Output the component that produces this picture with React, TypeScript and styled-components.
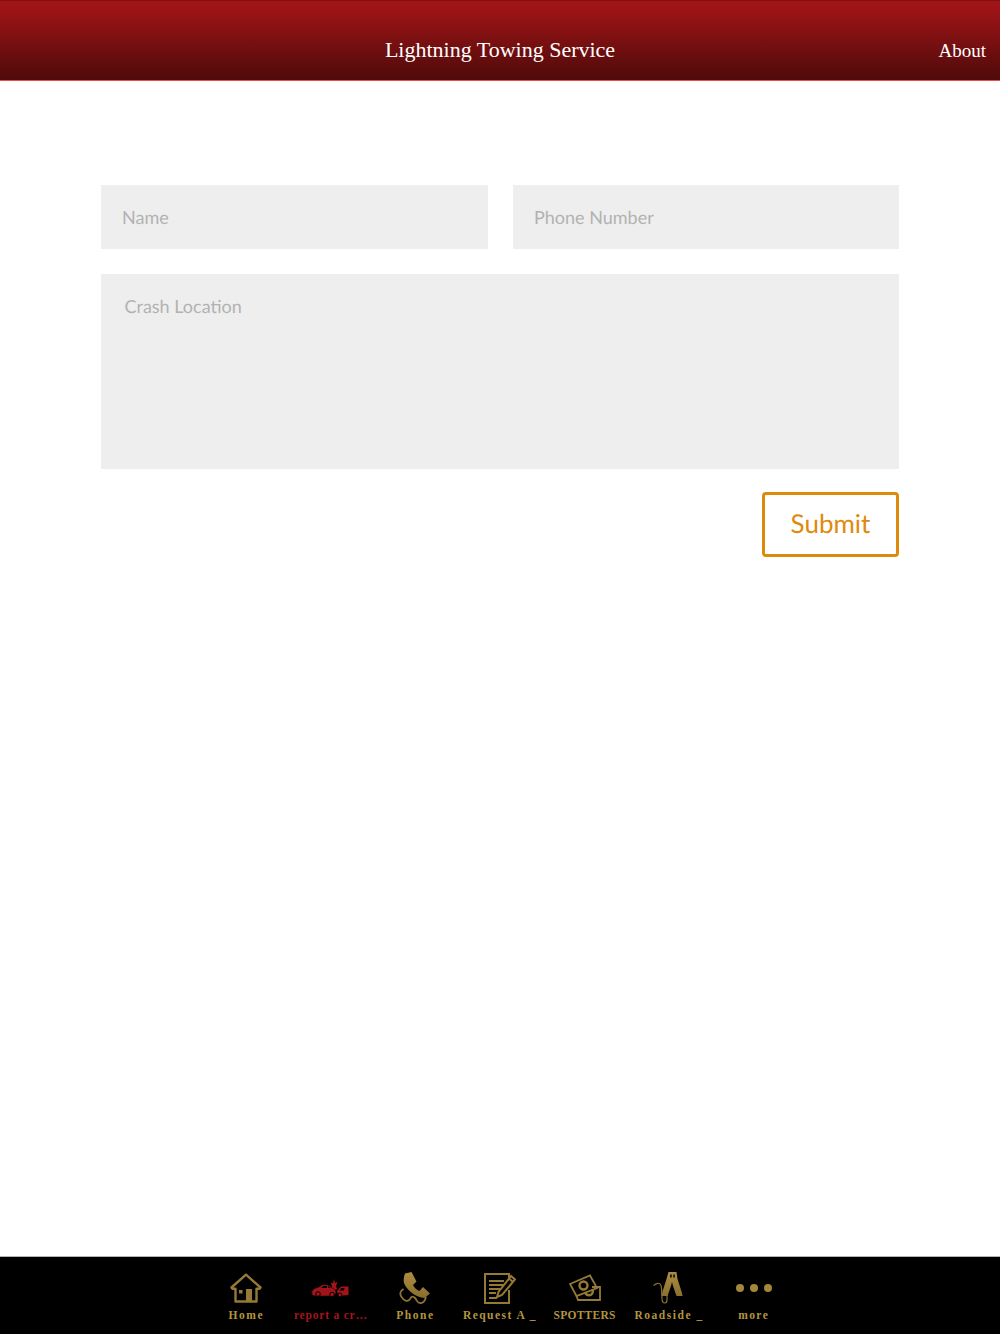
import React from "react";
import styled, { createGlobalStyle } from "styled-components";

const Global = createGlobalStyle`
  html, body { margin: 0; padding: 0; background: #fff; height: 100%; }
  #root { height: 100%; }
  * { box-sizing: border-box; }
`;

const Page = styled.div`
  width: 1000px;
  height: 1334px;
  display: flex;
  flex-direction: column;
  overflow: hidden;
  background: #fff;
`;

const Header = styled.header`
  position: relative;
  flex: none;
  height: 81px;
  display: flex;
  align-items: center;
  justify-content: center;
  padding-top: 18px;
  background: linear-gradient(180deg, #a21416 0%, #9c1416 12%, #4f0a0a 100%);
  border-top: 1px solid #7d1214;
  border-bottom: 1px solid #f04a4c;
  color: #fff;
`;

const Title = styled.h1`
  margin: 0;
  font-family: "Liberation Serif", serif;
  font-size: 22px;
  line-height: 26px;
  font-weight: 400;
`;

const HeaderAction = styled.span`
  position: absolute;
  right: 14px;
  top: 38px;
  font-family: "Liberation Serif", serif;
  font-size: 19px;
  line-height: 24px;
`;

const Main = styled.main`
  flex: 1;
  padding: 104px 101px 0;
`;

const Form = styled.form`
  display: flex;
  flex-direction: column;
  align-items: stretch;
`;

const Row = styled.div`
  display: grid;
  grid-template-columns: 387px 386px;
  column-gap: 25px;
  margin-bottom: 25px;
`;

const Field = styled.input`
  height: 64px;
  width: 100%;
  padding: 0 21px;
  border: 0;
  border-radius: 0;
  outline: 0;
  background: #eee;
  font-family: Lato, sans-serif;
  font-size: 18px;
  text-rendering: geometricPrecision;
  &::placeholder { color: #b2b2b2; opacity: 1; }
`;

const Area = styled.textarea`
  display: block;
  height: 195px;
  width: 100%;
  padding: 20px 23.5px;
  border: 0;
  border-radius: 0;
  outline: 0;
  resize: none;
  background: #eee;
  font-family: Lato, sans-serif;
  font-size: 18px;
  line-height: 24px;
  text-rendering: geometricPrecision;
  &::placeholder { color: #b2b2b2; opacity: 1; }
`;

const Actions = styled.div`
  display: flex;
  justify-content: flex-end;
  margin-top: 23px;
`;

const Submit = styled.button`
  width: 137px;
  height: 65px;
  padding: 0 0 3px;
  background: #fff;
  border: 3px solid #e08a0c;
  border-radius: 4px;
  color: #e08a0c;
  font-family: Lato, sans-serif;
  font-size: 26px;
  font-weight: 400;
  text-rendering: geometricPrecision;
`;

const TabBar = styled.nav`
  flex: none;
  height: 78px;
  background: #000;
  border-top: 1px solid #b5b5b5;
  display: flex;
  justify-content: center;
`;

const Tab = styled.div`
  width: 84.57px;
  display: flex;
  flex-direction: column;
  align-items: center;
`;

const IconSlot = styled.div`
  height: 40px;
  margin-top: 11px;
  width: 44px;
  display: flex;
  align-items: center;
  justify-content: center;
`;

const TabLabel = styled.span<{ $active?: boolean; $spacing: number }>`
  font-family: "Liberation Serif", serif;
  font-size: 11.5px;
  line-height: 14px;
  font-weight: 700;
  letter-spacing: ${(p) => p.$spacing}px;
  white-space: nowrap;
  color: ${(p) => (p.$active ? "#a8141a" : "#b3953f")};
`;

const Defs = styled.svg`
  position: absolute;
  width: 0;
  height: 0;
`;

const Gold = () => (
  <Defs>
    <defs>
      <linearGradient id="gold" gradientUnits="userSpaceOnUse" x1="0" y1="0" x2="0" y2="32">
        <stop offset="0" stopColor="#ad8e40" />
        <stop offset="1" stopColor="#806528" />
      </linearGradient>
    </defs>
  </Defs>
);

const HomeIcon = () => (
  <svg width="32" height="30" viewBox="0 0 32 30" fill="none" stroke="#957a35" strokeWidth="2.400">
    <path d="M1.500 14.500 16 1.700l14.500 12.800-1 1.300H26.500V28.500H5.500V15.800H2.500z" strokeLinejoin="round" />
    <rect x="16" y="16" width="6" height="13" fill="#957a35" stroke="none" />
    <rect x="9" y="17" width="3.500" height="3.500" fill="#957a35" stroke="none" />
  </svg>
);

const CrashIcon = () => (
  <svg width="37" height="18" viewBox="0 0 37 18" fill="#a3141a">
    <path d="M22 0l1 4 2.500-1-1.500 4 1 3-3 2-3-2 1-3-1.500-3.500 2.500 1z" />
    <path d="M0 13c0-2.500 3-4 6-4.500l4-2.500c4-1 8 0 10 3l3.500 2 .5 3-2 3H3l-3-1z" stroke="#000" strokeWidth=".5" />
    <path d="M25 12l4-4.500h7.500V16l-10 1z" />
    <path d="M9 9l2.500-2H15v2zM16 7l3 2h-3zM29.500 9h3l-.5 2.500h-4.500z" fill="#000" />
    <circle cx="6" cy="15" r="2.300" stroke="#000" />
    <circle cx="20" cy="15.500" r="2.300" stroke="#000" />
    <circle cx="28" cy="16" r="2" stroke="#000" />
  </svg>
);

const PhoneIcon = () => (
  <svg width="32" height="32" viewBox="0 0 32 32" fill="none">
    <path d="M6 1.500 12.500 0l5 9.500L14 13c1 2.500 3.500 5 6.500 6l3.500-4 7 6.500-5.500 4.500C17 25.500 7.500 18 5 11c-.7-3-.2-6.500 1-9.500z" fill="url(#gold)" />
    <path d="M4.500 17C1 19 .5 22 2.500 25c2 3 6 6 8.500 2 1.500-3 3-3 5-1s2 5 5 5c3 .5 5-2 6-6" stroke="#8d7231" strokeWidth="1.800" />
  </svg>
);

const FormIcon = () => (
  <svg width="32" height="31" viewBox="0 0 32 31" fill="none" stroke="#957a35" strokeWidth="2">
    <path d="M25 7V1H1v29h24V17" />
    <path d="M5 8h15M5 12h15M5 16h11M5 20h7M5 25h8" />
    <path d="M13 24l1.500-5L27 3l4 3.500L18 22z" fill="#000" />
    <path d="M25 5.500l4 3.500" />
  </svg>
);

const MoneyIcon = () => (
  <svg width="32" height="28" viewBox="0 0 32 28" fill="none" stroke="#957a35" strokeWidth="1.800">
    <path d="M1 10 21 1.500 28 14 7.500 22z" />
    <circle cx="14.500" cy="11.500" r="4" strokeWidth="2.400" />
    <path d="M23 13h8v13H9l-1.500-4" />
    <path d="M16 19c2 3 6 3 7.500 0l.5-3" strokeWidth="2.400" />
  </svg>
);

const CablesIcon = () => (
  <svg width="32" height="32" viewBox="0 0 32 32" fill="none">
    <path d="M15.500 0h8l1 7 4.500 14 .5 3h-6l-3.500-10-1-4-1 4-3.500 10h-6l.5-3 4.500-14z" fill="url(#gold)" />
    <rect x="17.200" y="2.500" width="1.500" height="3" fill="#000" />
    <rect x="20.300" y="2.500" width="1.500" height="3" fill="#000" />
    <path d="M.5 13.500c3-2.500 5.500-3 7-1 1.500 2 1 5 1.500 14 0 3 1.500 4.500 3 4.500s2-1.500 2-3v-5" stroke="#8d7231" strokeWidth="1.200" />
  </svg>
);

const MoreIcon = () => (
  <svg width="36" height="8" viewBox="0 0 36 8" fill="#a3873a">
    <circle cx="4" cy="4" r="4" />
    <circle cx="18" cy="4" r="4" />
    <circle cx="32" cy="4" r="4" />
  </svg>
);

const tabs = [
  { label: "Home", icon: <HomeIcon />, spacing: 1.6 },
  { label: "report a cr…", icon: <CrashIcon />, active: true, spacing: 0.8 },
  { label: "Phone", icon: <PhoneIcon />, spacing: 1.5 },
  { label: "Request A _", icon: <FormIcon />, spacing: 1.45 },
  { label: "SPOTTERS", icon: <MoneyIcon />, spacing: 0.25 },
  { label: "Roadside _", icon: <CablesIcon />, spacing: 1.55 },
  { label: "more", icon: <MoreIcon />, spacing: 1.4 },
];

export default function App() {
  return (
    <Page>
      <Global />
      <Gold />
      <Header>
        <Title>Lightning Towing Service</Title>
        <HeaderAction>About</HeaderAction>
      </Header>
      <Main>
        <Form onSubmit={(e) => e.preventDefault()}>
          <Row>
            <Field placeholder="Name" />
            <Field placeholder="Phone Number" />
          </Row>
          <Area placeholder="Crash Location" />
          <Actions>
            <Submit type="submit">Submit</Submit>
          </Actions>
        </Form>
      </Main>
      <TabBar>
        {tabs.map((t) => (
          <Tab key={t.label}>
            <IconSlot>{t.icon}</IconSlot>
            <TabLabel $active={t.active} $spacing={t.spacing}>{t.label}</TabLabel>
          </Tab>
        ))}
      </TabBar>
    </Page>
  );
}
